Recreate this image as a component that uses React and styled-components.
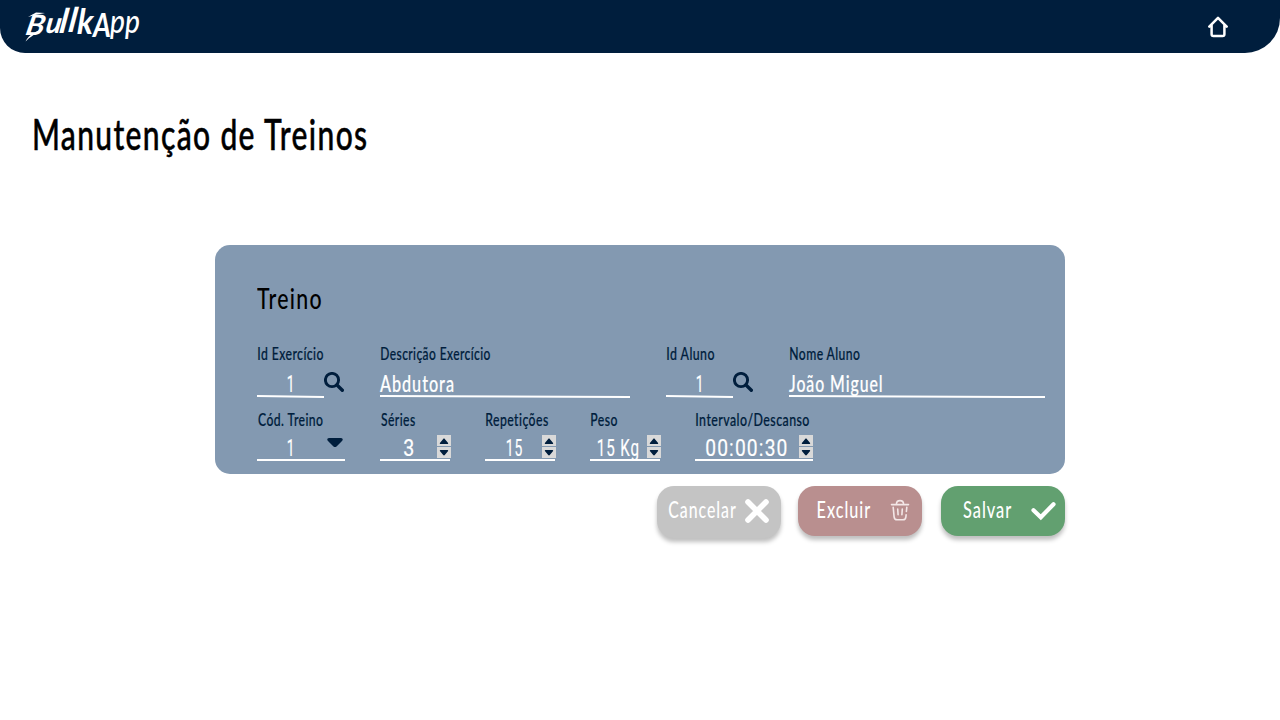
import React, { useLayoutEffect, useRef, useState } from "react";
import styled, { createGlobalStyle } from "styled-components";

const NAVY = "#001e3d";

const GlobalStyle = createGlobalStyle`
  *, *::before, *::after { box-sizing: border-box; }
  body { margin: 0; background: #fff; font-family: Lato, "Liberation Sans", sans-serif; }
`;

/* Condensed lettering: the glyphs are squeezed to the given width. */
const FitBox = styled.span`
  display: block;
  flex: none;
  width: ${(p) => p.$w}px;
  white-space: nowrap;
`;
const FitInk = styled.span`
  display: inline-block;
  transform-origin: 0 50%;
`;

function Fit({ w, children }) {
  const ref = useRef(null);
  const [transform, setTransform] = useState("none");
  useLayoutEffect(() => {
    const cs = getComputedStyle(ref.current);
    const ctx = document.createElement("canvas").getContext("2d");
    ctx.font = `${cs.fontWeight} ${cs.fontSize} ${cs.fontFamily}`;
    if (cs.letterSpacing !== "normal") ctx.letterSpacing = cs.letterSpacing;
    const m = ctx.measureText(children);
    const s = w / (m.actualBoundingBoxRight + m.actualBoundingBoxLeft);
    setTransform(`translateX(${m.actualBoundingBoxLeft * s}px) scaleX(${s})`);
  }, [w, children]);
  return (
    <FitBox $w={w}>
      <FitInk ref={ref} style={{ transform }}>{children}</FitInk>
    </FitBox>
  );
}

const Header = styled.header`
  display: flex;
  justify-content: space-between;
  align-items: flex-start;
  height: 53px;
  padding: 0 52px 0 25px;
  background: ${NAVY};
  border-radius: 0 0 35px 25px;
  color: #fff;
`;
const Logo = styled.div`
  position: relative;
  display: flex;
  width: 116px;
  height: 46px;
`;
const LogoLetter = styled.span`
  flex: none;
  width: ${(p) => p.$w}px;
  font: italic ${(p) => p.$weight} ${(p) => p.$size}px/46px Lato, sans-serif;
  transform: translateY(${(p) => p.$y}px) skewX(${(p) => p.$skew}deg) scaleX(${(p) => p.$sx});
  transform-origin: 0 70%;
`;
const LogoTail = styled.svg`
  position: absolute;
  left: 0;
  top: 0;
`;
const HomeLink = styled.a`
  display: block;
  margin: 16px 0 0;
  height: 22px;
`;

const Page = styled.main`
  display: flex;
  flex-direction: column;
  min-height: 667px;
`;
const PageTitle = styled.h1`
  margin: 55px 0 0 34px;
  height: 50px;
  font-size: 42.5px;
  font-weight: 500;
  line-height: 51px;
  letter-spacing: 0.045em;
  color: #000;
  -webkit-text-stroke: 0.5px currentColor;
`;
const Content = styled.div`
  width: 850px;
  margin: 87px auto 0;
`;
const Card = styled.section`
  height: 229px;
  padding: 32px 20px 0 42px;
  background: #8399b1;
  border-radius: 15px;
`;
const CardTitle = styled.h2`
  margin: 0 0 26px 0;
  height: 40px;
  font-size: 29.5px;
  font-weight: 500;
  line-height: 41px;
  letter-spacing: 0.06em;
  color: #000;
`;
const FieldRow = styled.div`
  display: flex;
  gap: ${(p) => p.$gap}px;
  & + & { margin-top: 12px; }
`;
const Field = styled.div`
  flex: none;
  width: ${(p) => p.$w}px;
`;
const Label = styled.div`
  height: 20px;
  padding-left: 0.6px;
  font-size: 16.8px;
  font-weight: 500;
  line-height: 21px;
  letter-spacing: 0.035em;
  color: ${NAVY};
  -webkit-text-stroke: 0.2px currentColor;
`;
const Control = styled.div`
  display: flex;
  align-items: flex-start;
`;
const Entry = styled.div`
  display: flex;
  justify-content: space-between;
  flex: none;
  width: ${(p) => p.$w}px;
  height: ${(p) => (p.$tilt ? 34 : 32)}px;
  position: relative;
  &::after {
    content: "";
    position: absolute;
    left: 0;
    right: 0;
    bottom: 0;
    height: 2px;
    background: #fff;
    transform: translateY(${(p) => (p.$tilt ? 0.5 : 0)}px) skewY(${(p) => (p.$tilt ? Math.atan(1 / p.$w) : 0)}rad);
  }
`;
const Value = styled.div`
  padding: ${(p) => p.$top}px 0 0 ${(p) => p.$left || 0}px;
  height: 24px;
  font-family: ${(p) => (p.$digits ? "Roboto" : "Lato")}, "Liberation Sans", sans-serif;
  font-size: ${(p) => (p.$digits ? 24 : 23.4)}px;
  font-weight: ${(p) => (p.$digits ? 400 : 500)};
  line-height: 24px;
  letter-spacing: 0.06em;
  color: #fff;
  -webkit-text-stroke: 0.2px currentColor;
`;
const SearchButton = styled.span`
  display: block;
  height: 20px;
  margin-top: 9px;
`;
const CaretSlot = styled.span`
  display: flex;
  align-items: flex-start;
  margin: 8px 2px 0 0;
  height: 10px;
`;
const Stepper = styled.span`
  display: grid;
  gap: 1px;
  height: 23px;
  margin: 6px ${(p) => -p.$over}px 0 0;
`;
const Step = styled.span`
  display: flex;
  align-items: center;
  justify-content: center;
  width: 14px;
  height: 11px;
  background: #d9d9d9;
  svg { transform: rotate(${(p) => (p.$down ? 180 : 0)}deg); }
`;
const Actions = styled.div`
  display: flex;
  align-items: flex-start;
  justify-content: flex-end;
  gap: 17px;
  margin-top: 12px;
  padding-right: 0.5px;
`;
const ActionButton = styled.button`
  display: flex;
  justify-content: space-between;
  flex: none;
  width: 124px;
  height: ${(p) => p.$h || 50}px;
  margin: 0 0 0 ${(p) => p.$ml || 0}px;
  padding: 0 ${(p) => p.$pr}px 0 ${(p) => p.$pl}px;
  border: 0;
  border-radius: 17px;
  background: ${(p) => p.$bg};
  box-shadow: 0 4px 4px rgba(0, 0, 0, 0.25);
  color: #fff;
  font: 500 23.4px/47px Lato, sans-serif;
  letter-spacing: 0.06em;
  text-align: left;
  svg { flex: none; margin-top: ${(p) => p.$it}px; }
`;

const SearchIcon = () => (
  <SearchButton>
    <svg width="20" height="20" viewBox="0 0 20 20" fill="none" stroke={NAVY} strokeLinecap="round">
      <circle cx="8" cy="8" r="6.6" strokeWidth="2.9" />
      <path d="M13 13l5.3 5.2" strokeWidth="3.4" />
    </svg>
  </SearchButton>
);
const StepIcon = () => (
  <svg width="10" height="6" viewBox="0 0 10 6">
    <path d="M1.400 6C.7 6 .7 5.100 1.100 4.700L4.200.9c.5-.6 1.100-.6 1.600 0l3.100 3.800c.4.400.4 1.300-.3 1.300z" fill={NAVY} />
  </svg>
);
const StepControl = ({ over = 0 }) => (
  <Stepper $over={over}>
    <Step><StepIcon /></Step>
    <Step $down><StepIcon /></Step>
  </Stepper>
);

const Lookup = ({ label, labelW }) => (
  <Field $w={87}>
    <Label><Fit w={labelW}>{label}</Fit></Label>
    <Control>
      <Entry $w={67} $tilt>
        <Value $digits $top={9} $left={31}><Fit w={4}>1</Fit></Value>
      </Entry>
      <SearchIcon />
    </Control>
  </Field>
);
const TextField = ({ label, labelW, value, valueW, w }) => (
  <Field $w={w}>
    <Label><Fit w={labelW}>{label}</Fit></Label>
    <Entry $w={w} $tilt>
      <Value $top={8}><Fit w={valueW}>{value}</Fit></Value>
    </Entry>
  </Field>
);
const NumberField = ({ label, labelW, value, valueW, left, w, over = 0, control }) => (
  <Field $w={w}>
    <Label><Fit w={labelW}>{label}</Fit></Label>
    <Entry $w={w}>
      <Value $digits $top={7} $left={left}><Fit w={valueW}>{value}</Fit></Value>
      {control || <StepControl over={over} />}
    </Entry>
  </Field>
);

/* letter, advance, size, vertical shift, horizontal scale, weight, skew */
const LETTERS = [
  ["B", 20, 28, 1, 1.08, 700, -12],
  ["u", 14, 29, -1, 1.0, 700, -9],
  ["l", 9, 34, -3, 1.0, 700, -8],
  ["l", 9, 34, -4, 1.0, 700, -8],
  ["k", 16, 35, -3, 0.92, 700, -3],
  ["A", 17, 32, 2, 0.86, 700, 0],
  ["p", 15, 32, -2, 0.88, 500, 0],
  ["p", 15, 32, -2, 0.88, 500, 0],
];

export default function App() {
  return (
    <>
      <GlobalStyle />
      <Header>
        <Logo>
          {LETTERS.map(([c, w, size, y, sx, weight, skew], i) => (
            <LogoLetter key={i} $w={w} $size={size} $y={y} $sx={sx} $weight={weight} $skew={skew}>{c}</LogoLetter>
          ))}
          <LogoTail width="24" height="46" viewBox="0 0 24 46">
            <path d="M.5 41.500C3 36.500 7 32.500 18 29C10 34 5 37 .5 41.500zM3 17L11 12.500L20 13L10 15z" fill="#fff" />
          </LogoTail>
        </Logo>
        <HomeLink>
          <svg width="20" height="22" viewBox="0 0 20 22" fill="none" stroke="#fff" strokeWidth="2.500" strokeLinecap="round" strokeLinejoin="round">
            <path d="M1.300 10.600L10 1.900l8.700 8.700M3.600 9v9.200q0 1.800 1.800 1.800h9.200q1.800 0 1.800-1.800V9" />
          </svg>
        </HomeLink>
      </Header>
      <Page>
        <PageTitle><Fit w={333}>Manutenção de Treinos</Fit></PageTitle>
        <Content>
          <Card>
            <CardTitle><Fit w={64}>Treino</Fit></CardTitle>
            <FieldRow $gap={36}>
              <Lookup label="Id Exercício" labelW={65} />
              <TextField label="Descrição Exercício" labelW={109} value="Abdutora" valueW={73.5} w={250} />
              <Lookup label="Id Aluno" labelW={47.5} />
              <TextField label="Nome Aluno" labelW={70} value="João Miguel" valueW={92.5} w={256} />
            </FieldRow>
            <FieldRow $gap={35}>
              <NumberField
                label="Cód. Treino" labelW={65} value="1" valueW={4} left={31} w={88}
                control={
                  <CaretSlot>
                    <svg width="16" height="11" viewBox="0 0 16 11">
                      <path d="M2 1h12c1.800 0 2.300 1.900 1 3L9.500 9.400c-.9.900-2.100.9-3 0L1 4C-.3 2.900.2 1 2 1z" fill={NAVY} />
                    </svg>
                  </CaretSlot>
                }
              />
              <NumberField label="Séries" labelW={34} value="3" valueW={9} left={24} w={70} over={1} />
              <NumberField label="Repetições" labelW={62} value="15" valueW={15} left={21.5} w={70} over={1} />
              <NumberField label="Peso" labelW={26} value="15 Kg" valueW={40} left={8} w={70} over={1} />
              <NumberField label="Intervalo/Descanso" labelW={113} value="00:00:30" valueW={81} left={11} w={118} />
            </FieldRow>
          </Card>
          <Actions>
            <ActionButton $bg="#c4c4c4" $h={52} $pl={11.5} $pr={12} $it={13}>
              <Fit w={67}>Cancelar</Fit>
              <svg width="24" height="24" viewBox="0 0 24 24" stroke="#fff" strokeWidth="5.600" strokeLinecap="round">
                <path d="M3 3l18 18M21 3L3 21" />
              </svg>
            </ActionButton>
            <ActionButton $bg="#b98f8f" $pl={19.5} $pr={12} $it={13}>
              <Fit w={52.5}>Excluir</Fit>
              <svg width="20" height="22" viewBox="0 0 20 22" fill="none" stroke="#f3e7e7" strokeWidth="1.600" strokeLinecap="round">
                <path d="M1.500 5.600h17M6.400 5.200C6.500.4 13.500.4 13.600 5.200M3.200 8.300l.9 9.500q.3 2.900 3 2.900h5.800q2.700 0 3-2.900l.2-2M16.800 8.300l-.4 4.200M7.700 10l.4 5.800M12.300 10l-.4 5.800" />
              </svg>
            </ActionButton>
            <ActionButton $bg="#62a070" $ml={1.5} $pl={22} $pr={8.5} $it={15}>
              <Fit w={48.5}>Salvar</Fit>
              <svg width="25" height="20" viewBox="0 0 25 20" fill="none" stroke="#fff" strokeWidth="4.200" strokeLinecap="round" strokeLinejoin="miter">
                <path d="M2.500 9.300l7.300 7L22.500 3.200" />
              </svg>
            </ActionButton>
          </Actions>
        </Content>
      </Page>
    </>
  );
}
